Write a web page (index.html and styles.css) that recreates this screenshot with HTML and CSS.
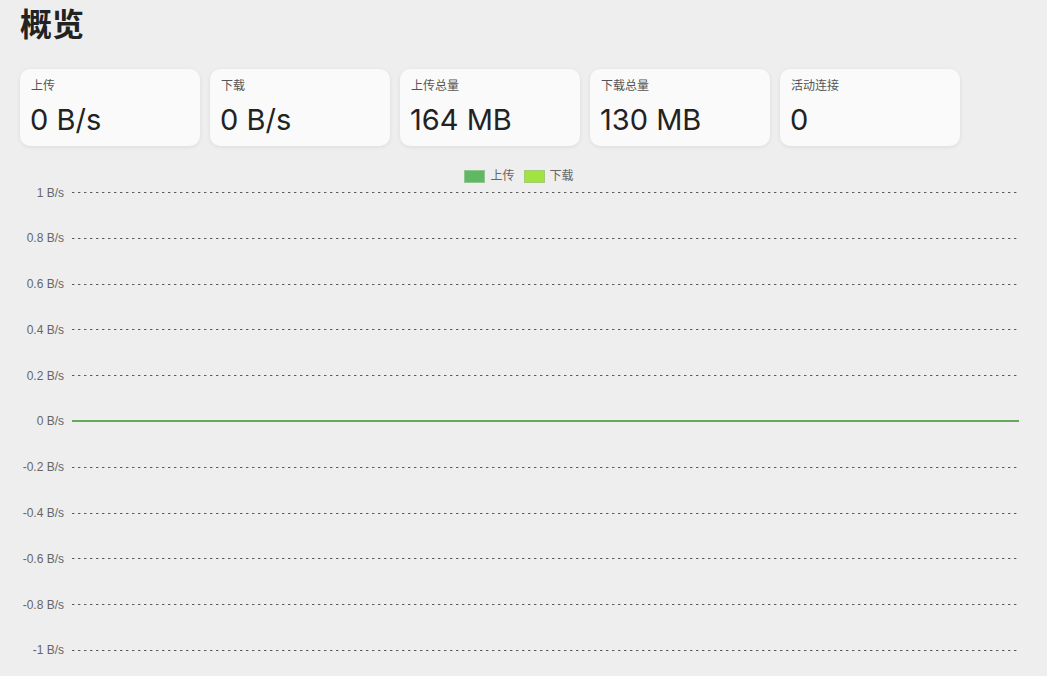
FILE: index.html
```html
<!DOCTYPE html>
<html lang="zh">
<head>
<meta charset="utf-8">
<title>概览</title>
<link rel="stylesheet" href="styles.css">
</head>
<body>
<main class="page">
  <h1 class="title">概览</h1>
  <section class="cards">
    <div class="card"><div class="card-label">上传</div><div class="card-value">0 B/s</div></div>
    <div class="card"><div class="card-label">下载</div><div class="card-value">0 B/s</div></div>
    <div class="card"><div class="card-label">上传总量</div><div class="card-value">164 MB</div></div>
    <div class="card"><div class="card-label">下载总量</div><div class="card-value">130 MB</div></div>
    <div class="card"><div class="card-label">活动连接</div><div class="card-value">0</div></div>
  </section>
  <section class="chart">
    <div class="legend">
      <span class="legend-item"><span class="swatch swatch-up"></span>上传</span>
      <span class="legend-item"><span class="swatch swatch-down"></span>下载</span>
    </div>
    <div class="grid">
      <div class="row"><span class="ylabel">1 B/s</span><span class="line"></span></div>
      <div class="row"><span class="ylabel">0.8 B/s</span><span class="line"></span></div>
      <div class="row"><span class="ylabel">0.6 B/s</span><span class="line"></span></div>
      <div class="row"><span class="ylabel">0.4 B/s</span><span class="line"></span></div>
      <div class="row"><span class="ylabel">0.2 B/s</span><span class="line"></span></div>
      <div class="row"><span class="ylabel">0 B/s</span><span class="line line-zero"></span></div>
      <div class="row"><span class="ylabel">-0.2 B/s</span><span class="line"></span></div>
      <div class="row"><span class="ylabel">-0.4 B/s</span><span class="line"></span></div>
      <div class="row"><span class="ylabel">-0.6 B/s</span><span class="line"></span></div>
      <div class="row"><span class="ylabel">-0.8 B/s</span><span class="line"></span></div>
      <div class="row"><span class="ylabel">-1 B/s</span><span class="line"></span></div>
    </div>
  </section>
</main>
</body>
</html>
```

FILE: styles.css
```css
* { box-sizing: border-box; }
html, body {
  margin: 0;
  padding: 0;
  background: #eeeeee;
}
body {
  font-family: Inter, "Noto Sans CJK SC", sans-serif;
  color: #222;
}
.page {
  padding: 0 28px 24px 20px;
}
.title {
  margin: 0;
  padding-top: 1px;
  font-family: "Noto Sans CJK SC", sans-serif;
  font-size: 32px;
  font-weight: 700;
  line-height: 42px;
  color: #222;
}
.cards {
  display: flex;
  gap: 10px;
  margin-top: 26px;
}
.card {
  width: 180px;
  height: 77px;
  background: #fafafa;
  border-radius: 10px;
  box-shadow: 0 1px 4px rgba(0, 0, 0, 0.08);
  padding: 8px 10px 0 10px;
}
.card-label {
  padding-left: 1px;
  font-family: "Noto Sans CJK SC", sans-serif;
  font-size: 12px;
  line-height: 16px;
  color: #555;
}
.card-value {
  margin-top: 9px;
  font-family: Inter, sans-serif;
  font-size: 29px;
  font-weight: 400;
  line-height: 36px;
  color: #222;
}
.chart {
  margin-top: 22px;
}
.legend {
  display: flex;
  justify-content: center;
  gap: 9px;
  height: 16px;
  padding-right: 1px;
  font-family: "Liberation Sans", "Noto Sans CJK SC", sans-serif;
  font-size: 12px;
  color: #666;
}
.legend-item {
  display: flex;
  align-items: center;
  gap: 5px;
  line-height: 16px;
}
.swatch {
  width: 21px;
  height: 13px;
  border: 1px solid;
}
.swatch-up {
  background: #5fb862;
  border-color: #93c593;
}
.swatch-down {
  background: #a2e43f;
  border-color: #a6c97a;
}
.grid {
  display: flex;
  flex-direction: column;
  gap: 44.8px;
  margin-top: 8px;
}
.row {
  display: flex;
  align-items: center;
  height: 1px;
}
.ylabel {
  width: 44px;
  flex: none;
  text-align: right;
  font-family: "Liberation Sans", sans-serif;
  font-size: 12px;
  color: #666;
  white-space: nowrap;
}
.line {
  margin-left: 8px;
  width: 947px;
  height: 1px;
  background: repeating-linear-gradient(to right, #5a5a5a 0 2px, #b4b4b4 2px 3px, transparent 3px 6px);
}
.line-zero {
  height: 2px;
  background: #67a95c;
}
```
